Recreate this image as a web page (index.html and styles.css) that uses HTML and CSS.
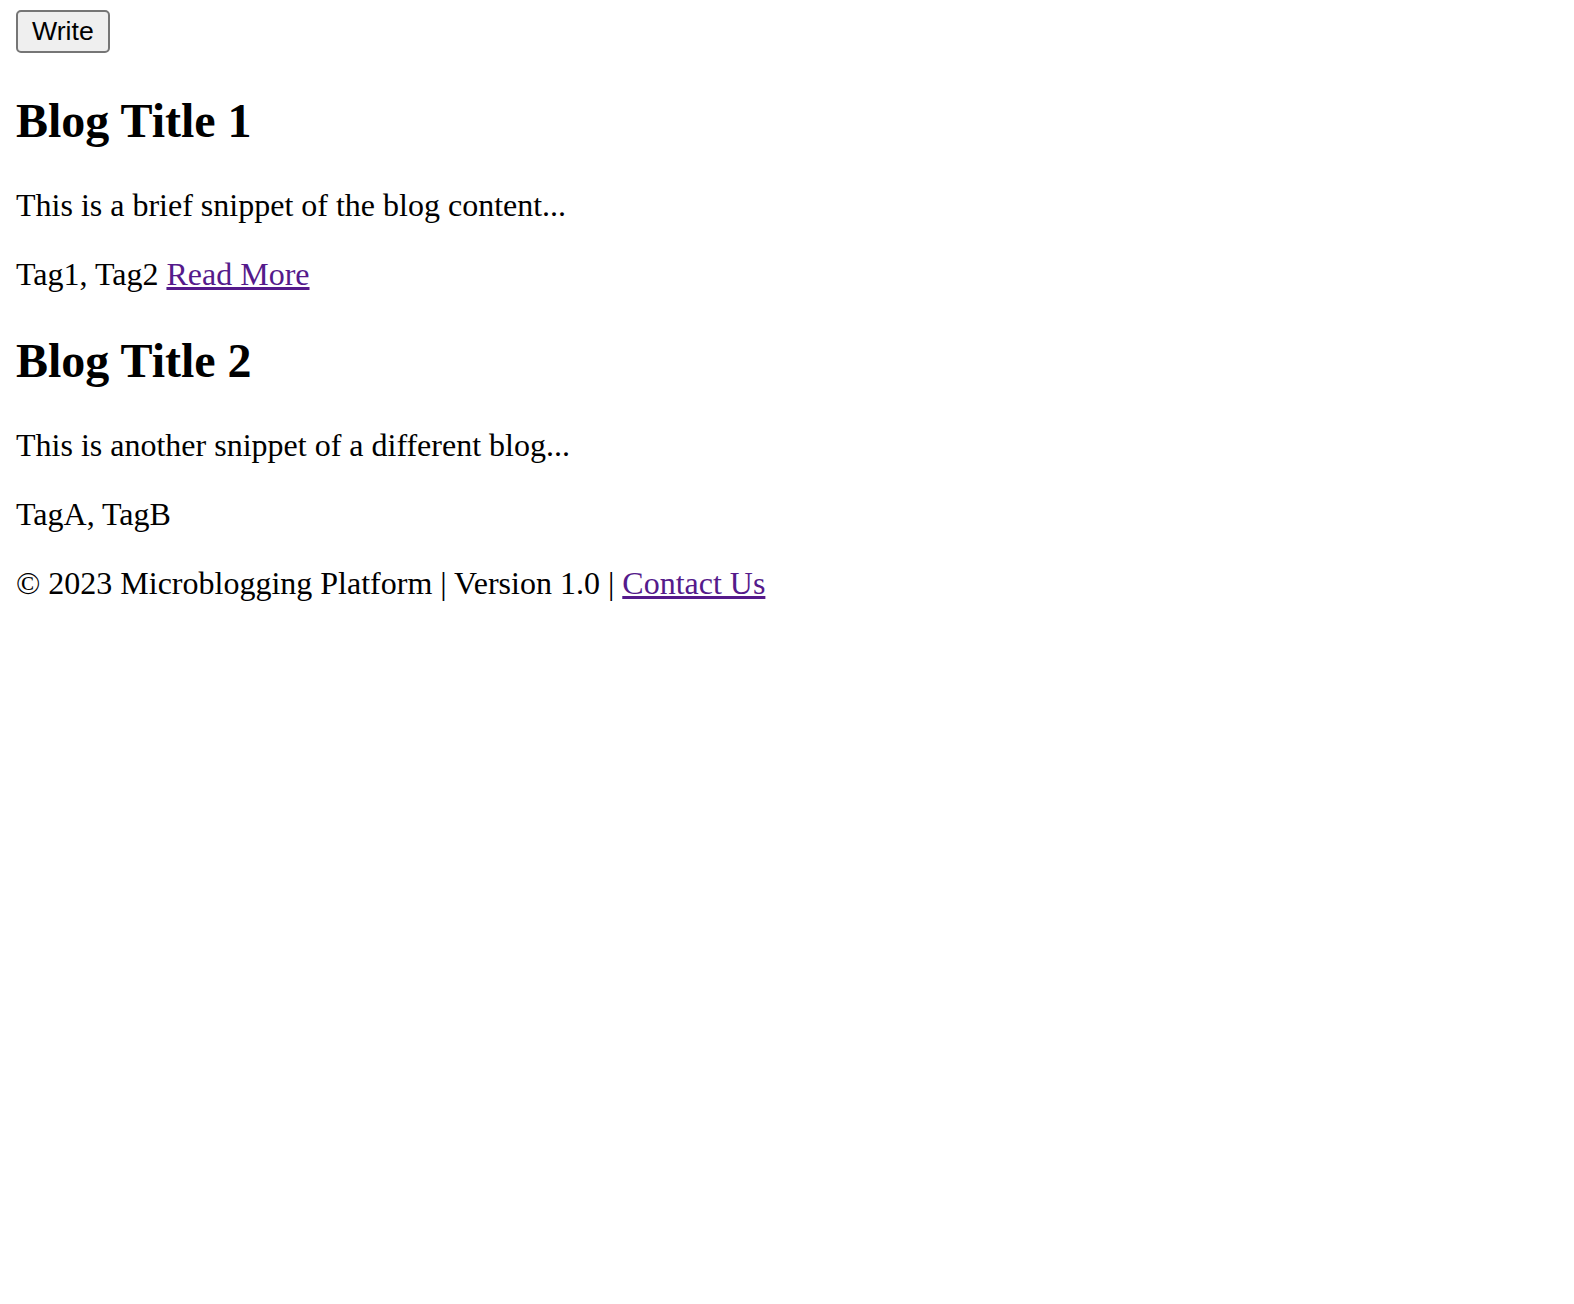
FILE: index.html
```html
<!DOCTYPE html>
<html lang="en">
<head>
<meta charset="utf-8">
<title>Microblogging Platform</title>
<link rel="stylesheet" href="styles.css">
</head>
<body>
<header class="top">
  <button class="write-btn" type="button">Write</button>
</header>
<main class="posts">
  <article class="post">
    <h2 class="post-title">Blog Title 1</h2>
    <p class="post-snippet">This is a brief snippet of the blog content...</p>
    <p class="post-tags">Tag1, Tag2 <a class="link" href="#">Read More</a></p>
  </article>
  <article class="post">
    <h2 class="post-title">Blog Title 2</h2>
    <p class="post-snippet">This is another snippet of a different blog...</p>
    <p class="post-tags">TagA, TagB</p>
  </article>
</main>
<footer class="footer">
  <p class="footer-text">&copy; 2023 Microblogging Platform | Version 1.0 | <a class="link" href="#">Contact Us</a></p>
</footer>
</body>
</html>
```

FILE: styles.css
```css
html, body {
  background: #ffffff;
}

body {
  margin: 0;
  padding: 10px 16px 16px;
  font-family: "Liberation Serif", "Times New Roman", serif;
  font-size: 32px;
  color: #000000;
}

.top {
  display: flex;
  align-items: flex-start;
}

.write-btn {
  font-family: "Liberation Sans", Arial, sans-serif;
  font-size: 26.67px;
  line-height: 31px;
  color: #000000;
  background: #efefef;
  border: 2px solid #767676;
  border-radius: 5px;
  padding: 4px 14px;
  margin: 0;
  cursor: pointer;
}

.post-title {
  font-size: 48px;
  font-weight: bold;
  margin: 39.5px 0 39.5px;
}

.post-snippet,
.post-tags,
.footer-text {
  margin: 32px 0;
}

.post-title + .post-snippet {
  margin-top: 0;
}

.link {
  color: #551a8b;
  text-decoration: underline;
}
```
